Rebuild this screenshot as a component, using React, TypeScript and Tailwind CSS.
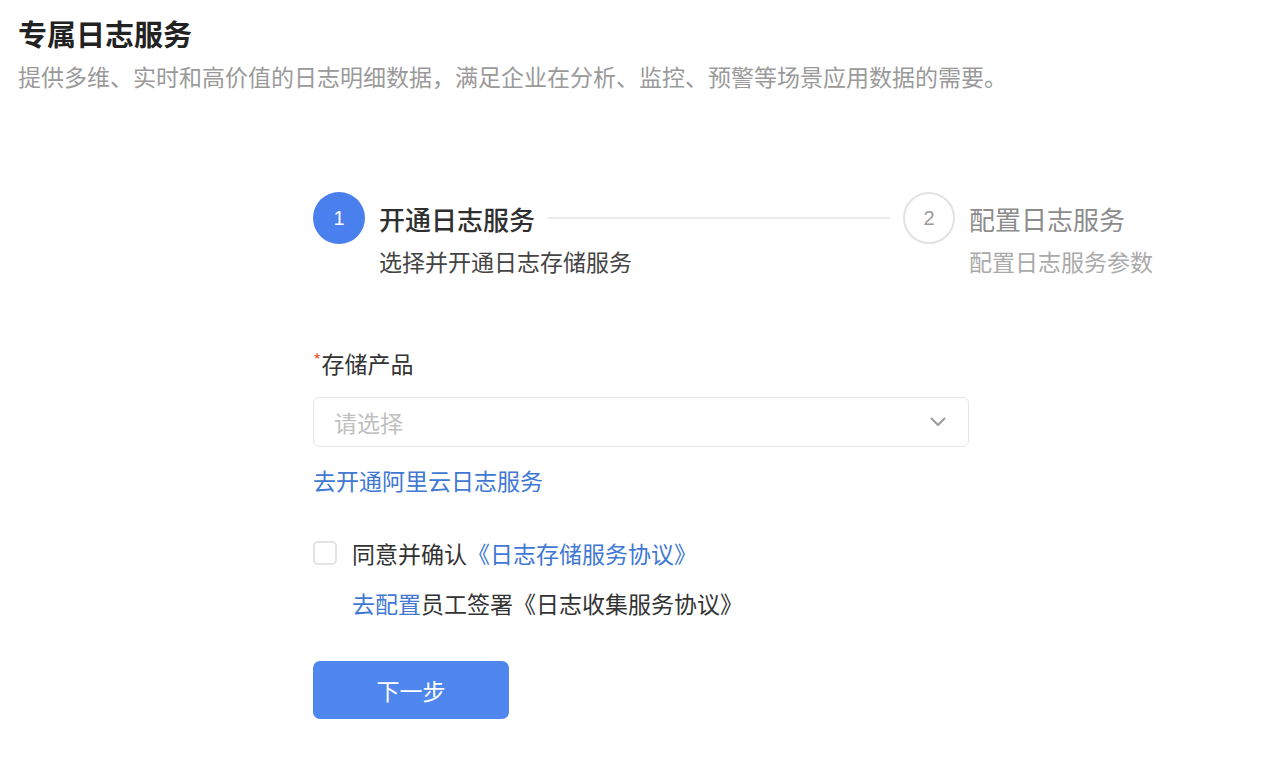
import React from "react";

const font = { fontFamily: '"Noto Sans CJK SC", "Noto Sans", sans-serif' };

export default function App() {
  return (
    <div className="w-[1280px] h-[782px] bg-white overflow-hidden" style={font}>
      <div className="pl-[18px] pt-[13px]">
        <div className="text-[29px] leading-[40px] font-bold text-[#222]">专属日志服务</div>
        <div className="mt-[7px] text-[23px] leading-[32px] text-[#9a9a9a]">
          提供多维、实时和高价值的日志明细数据，满足企业在分析、监控、预警等场景应用数据的需要。
        </div>
      </div>

      <div className="ml-[313px] mt-[100px] w-[840px]">
        {/* Steps */}
        <div className="flex">
          <div className="flex flex-1">
            <div className="w-[52px] h-[52px] rounded-full bg-[#4a7fee] flex items-center justify-center text-white text-[20px] shrink-0" style={{ fontFamily: '"Liberation Sans", sans-serif' }}>
              1
            </div>
            <div className="ml-[14px] flex-1 flex flex-col">
              <div className="h-[52px] flex items-center">
                <span className="text-[26px] font-medium text-[#2f2f2f] whitespace-nowrap">开通日志服务</span>
                <div className="flex-1 h-[2px] bg-[#ebebeb] ml-[13px] mr-[13px]" />
              </div>
              <div className="mt-[2px] text-[23px] leading-[30px] text-[#444] whitespace-nowrap">选择并开通日志存储服务</div>
            </div>
          </div>
          <div className="flex w-[250px]">
            <div className="w-[52px] h-[52px] rounded-full border-[2px] border-[#e2e2e2] flex items-center justify-center text-[#9a9a9a] text-[20px] shrink-0" style={{ fontFamily: '"Liberation Sans", sans-serif' }}>
              2
            </div>
            <div className="ml-[14px] flex flex-col">
              <div className="h-[52px] flex items-center text-[26px] text-[#8c8c8c] whitespace-nowrap">配置日志服务</div>
              <div className="mt-[2px] text-[23px] leading-[30px] text-[#aaa] whitespace-nowrap">配置日志服务参数</div>
            </div>
          </div>
        </div>

        {/* Form */}
        <div className="mt-[71px] w-[656px]">
          <div className="text-[23px] leading-[32px] text-[#333] flex items-center">
            <span className="text-[#e8653d] text-[18px] leading-[18px] self-start mt-[3px]">*</span>
            存储产品
          </div>
          <div className="mt-[18px] h-[50px] border border-[#e6e6e6] rounded-[6px] flex items-center justify-between pl-[20px] pr-[22px]">
            <span className="text-[23px] text-[#c0c0c0]">请选择</span>
            <svg width="16" height="10" viewBox="0 0 16 10" fill="none">
              <path d="M1.5 1.5 L8 8 L14.5 1.5" stroke="#9a9a9a" strokeWidth="2" strokeLinecap="round" strokeLinejoin="round" />
            </svg>
          </div>
          <div className="mt-[17px] text-[23px] leading-[32px] text-[#4078d4]">去开通阿里云日志服务</div>

          <div className="mt-[41px] flex items-center h-[32px]">
            <div className="w-[24px] h-[24px] rounded-[5px] border-[2px] border-[#e3e3e3] bg-white" />
            <span className="ml-[15px] text-[23px] leading-[32px] text-[#333] whitespace-nowrap">
              同意并确认<span className="text-[#4078d4]">《日志存储服务协议》</span>
            </span>
          </div>
          <div className="mt-[18px] ml-[39px] text-[23px] leading-[32px] text-[#333] whitespace-nowrap">
            <span className="text-[#4078d4]">去配置</span>员工签署《日志收集服务协议》
          </div>

          <button className="mt-[42px] w-[196px] h-[58px] rounded-[7px] bg-[#4f87ef] text-white text-[23px] flex items-center justify-center">
            下一步
          </button>
        </div>
      </div>
    </div>
  );
}
